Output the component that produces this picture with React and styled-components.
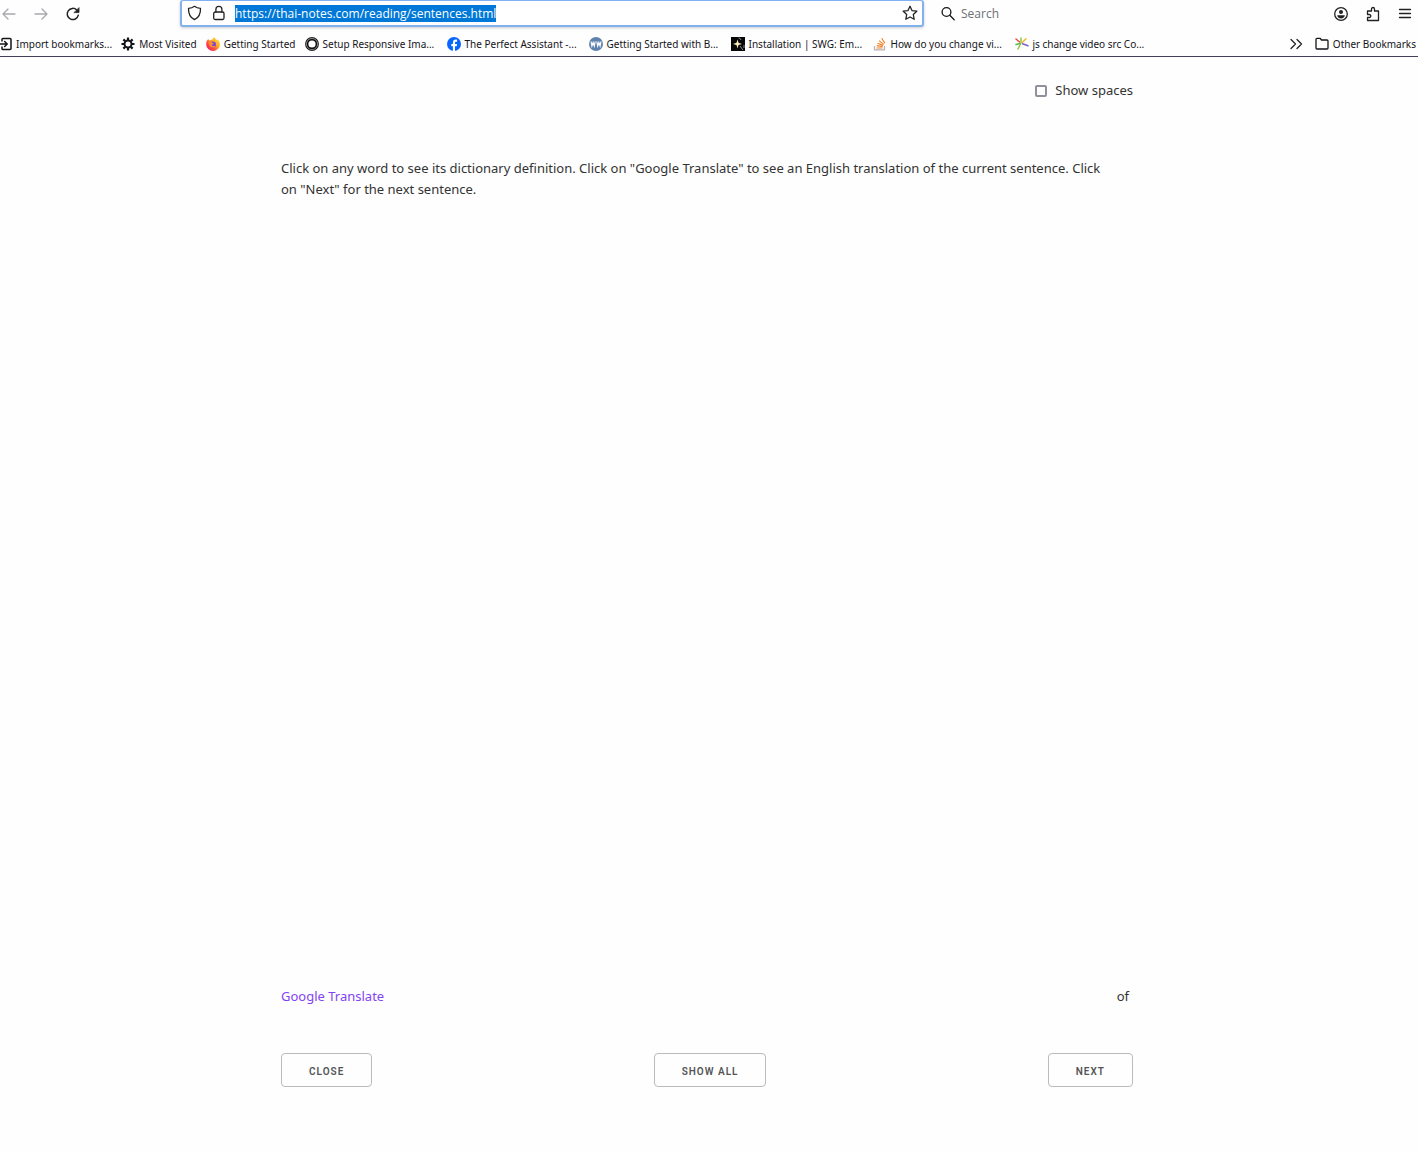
import React, { useEffect, useRef } from 'react';
import styled, { createGlobalStyle } from 'styled-components';

const GlobalStyle = createGlobalStyle`
  * {
    box-sizing: border-box;
  }
  body {
    margin: 0;
    background: #fefefe;
    color: #333333;
    font-family: "Noto Sans", sans-serif;
    font-size: 13px;
    line-height: 21px;
  }
  button, input {
    font-family: inherit;
  }
`

const Browser = styled.header`
  border-bottom: 1px solid #45405a;
  color: #15141a;
`

const NavBar = styled.div`
  display: grid;
  grid-template-columns: 180px minmax(0, 1fr) 494px;
  height: 27px;
  font-family: "Open Sans", sans-serif;
`

const NavGroup = styled.div`
  display: flex;
  align-items: center;
  gap: 16px;
  padding-left: 1px;
`

const IconButton = styled.button`
  display: flex;
  padding: 0;
  border: 0;
  background: none;
  color: ${props => props.disabled ? "#a9a9ad" : "#222222"};
`

const UrlBar = styled.div`
  display: flex;
  align-items: center;
  gap: 8px;
  padding: 0 4px 0 5px;
  border: 2px solid #82b1f2;
  border-top-width: 1px;
  border-radius: 3px;
  background: #ffffff;
  box-shadow: 0 1px 3px rgba(0, 0, 0, 0.2);
`

const UrlInput = styled.input`
  flex: 1;
  min-width: 0;
  height: 17px;
  padding: 0;
  border: 0;
  outline: 0;
  background: none;
  color: #15141a;
  font-size: 12px;
  line-height: 17px;
  &::selection {
    background: #0078d7;
    color: #ffffff;
  }
`

const NavRight = styled.div`
  display: flex;
  align-items: center;
  justify-content: space-between;
  padding: 0 5px 0 16px;
`

const SearchBox = styled.label`
  display: flex;
  align-items: center;
  gap: 5px;
`

const SearchInput = styled.input`
  width: 200px;
  padding: 0;
  border: 0;
  background: none;
  font-size: 12px;
  line-height: 17px;
  &::placeholder {
    color: #6f6f76;
    opacity: 1;
  }
`

const BookmarkBar = styled.nav`
  display: flex;
  align-items: center;
  gap: 9px;
  height: 29px;
  padding: 5px 2px 0 0;
`

const Bookmark = styled.a`
  display: flex;
  align-items: center;
  gap: 4px;
  color: #15141a;
  font-size: 10px;
  line-height: 16px;
  text-decoration: none;
  white-space: nowrap;
  svg {
    flex: none;
  }
`

const BookmarkLabel = styled.span`
  width: ${props => props.$long ? "115px" : "auto"};
`

const BookmarkEnd = styled.div`
  display: flex;
  align-items: center;
  gap: 12px;
  margin-left: auto;
`

const Main = styled.main`
  padding: 23px 4px 24px 0;
`

const Container = styled.div`
  width: 90%;
  max-width: 852px;
  margin: 0 auto;
`

const Options = styled.div`
  display: flex;
  justify-content: flex-end;
`

const CheckLabel = styled.label`
  display: flex;
  align-items: center;
  gap: 8px;
`

const Checkbox = styled.input`
  appearance: none;
  width: 12px;
  height: 12px;
  margin: 0;
  border: 2px solid #8f8f9d;
  border-radius: 2px;
  background: #ffffff;
`

const Intro = styled.p`
  margin: 57px 0 0;
  padding-right: 20px;
`

const Sentence = styled.section`
  min-height: 786px;
`

const Row = styled.div`
  display: flex;
  justify-content: space-between;
`

const TranslateLink = styled.a`
  color: #8343f5;
  text-decoration: none;
`

const Counter = styled.span`
  padding-right: 4px;
`

const Controls = styled(Row)`
  margin-top: 46px;
`

const Button = styled.button`
  height: 34px;
  padding: 3px 27px 0;
  border: 1px solid #bbbbbb;
  border-radius: 4px;
  background: transparent;
  color: #555555;
  font-family: Roboto, sans-serif;
  font-size: 10px;
  font-weight: 600;
  line-height: 12px;
  letter-spacing: 1px;
  text-transform: uppercase;
`

const Icon = ({ size = 16, width, box = "0 0 16 16", children }) => (
  <svg width={width || size} height={size} viewBox={box} fill="none" stroke="currentColor"
    strokeWidth="1.3" strokeLinecap="round" strokeLinejoin="round" aria-hidden="true">
    {children}
  </svg>
)

const BackIcon = () => <Icon><path d="M14 8H2M7 3L2 8l5 5" /></Icon>
const ForwardIcon = () => <Icon><path d="M2 8h12M9 3l5 5-5 5" /></Icon>
const ReloadIcon = () => (
  <Icon>
    <path strokeWidth="1.5" d="M13.3 9.2A5.6 5.6 0 1 1 11.8 4" />
    <path fill="currentColor" strokeWidth="0.8" d="M14 2v4.6H9.4z" />
  </Icon>
)
const ShieldIcon = () => (
  <Icon><path d="M7.500 1.300C9.200 2.700 11.100 3.300 13.500 3.400C13.700 8.700 11.700 12.500 7.500 14.700C3.300 12.500 1.300 8.700 1.500 3.400C3.900 3.300 5.800 2.700 7.500 1.300z" /></Icon>
)
const LockIcon = () => (
  <Icon><rect x="2.700" y="7" width="10.300" height="7.500" rx="1.500" /><path d="M4.900 7V4.300a3 3 0 0 1 6 0V7" /></Icon>
)
const StarIcon = () => (
  <Icon><path d="M8 1.300l2 4.300 4.800.6-3.500 3.300.9 4.800L8 12l-4.200 2.300.9-4.800L1.200 6.200 6 5.600z" /></Icon>
)
const SearchIcon = () => <Icon><circle cx="6.500" cy="6" r="4.400" /><path d="M9.800 9.300l4.400 4.400" /></Icon>
const AccountIcon = () => (
  <Icon>
    <circle cx="8" cy="8" r="6.300" />
    <circle cx="8" cy="6" r="2" fill="currentColor" stroke="none" />
    <path d="M4.200 9.200h7.600c0 2-1.700 3.200-3.800 3.200s-3.800-1.200-3.800-3.200z" fill="currentColor" stroke="none" />
  </Icon>
)
const PuzzleIcon = () => (
  <Icon><path d="M2.500 5h4V3a1.500 1.500 0 0 1 3 0v2H13.500v9.500H2.500V11.500h1.800a1.500 1.500 0 0 0 0-3H2.500z" /></Icon>
)
const MenuIcon = () => <Icon><path d="M2.500 3.500h11M2.500 7.500h11M2.500 11.500h11" /></Icon>

const ImportIcon = () => (
  <Icon size={14} width={12} box="2 0 12 14">
    <path strokeWidth="1.500" d="M4 4V2.300Q4 1.500 5 1.500h7Q13 1.500 13 2.500v9q0 1-1 1H5q-1 0-1-.8V10M0 7h9M6.700 4.500L9.200 7 6.700 9.500" />
  </Icon>
)
const GearIcon = () => (
  <Icon size={14} box="0 0 14 14">
    <circle cx="7" cy="7" r="3.500" strokeWidth="2" />
    <path strokeWidth="2.200" strokeLinecap="butt" d="M7 .5v2.500M7 11v2.500M.5 7H3M11 7h2.500M2.400 2.400l1.800 1.800M9.800 9.800l1.800 1.800M2.400 11.600l1.800-1.800M9.800 4.200l1.800-1.800" />
  </Icon>
)
const FirefoxIcon = () => (
  <svg width="14" height="14" viewBox="0 0 14 14" aria-hidden="true">
    <defs>
      <linearGradient id="fox" x1="1" y1="0" x2="0" y2="1">
        <stop offset="0" stopColor="#fff04a" />
        <stop offset=".4" stopColor="#ffad1f" />
        <stop offset=".7" stopColor="#ff3f47" />
        <stop offset="1" stopColor="#e31587" />
      </linearGradient>
    </defs>
    <path fill="url(#fox)" d="M1 3.500L2.300 2l.8 1.500L5 3C6.500 3 7 1.500 8.300 0c.4 1.800 2 2.200 3 3.600l.5-1C13 4 14 5.800 14 7.500A6.900 6.500 0 0 1 .2 7.500C.1 6 .5 4.600 1 3.500z" />
    <circle cx="7" cy="7.400" r="3" fill="#7a45dc" />
    <path fill="#ff8f2a" d="M2.500 5.300c1.500-.8 3-.5 4.200.6L8 6.300c-.5 1-1.800.8-2.200 1.600.4 1.200 2 1.600 3.800.8-1 2-5 2.400-6.300-.2z" />
  </svg>
)
const RingIcon = () => (
  <svg width="14" height="14" viewBox="0 0 14 14" fill="none" aria-hidden="true">
    <circle cx="7" cy="7" r="6.300" stroke="#222222" strokeWidth="1.300" />
    <circle cx="7" cy="7" r="5.300" stroke="#777777" strokeWidth=".8" />
    <circle cx="7" cy="7" r="4.400" stroke="#111111" strokeWidth="1.600" />
  </svg>
)
const FacebookIcon = () => (
  <svg width="14" height="14" viewBox="0 0 14 14" aria-hidden="true">
    <circle cx="7" cy="7" r="7" fill="#0866ff" />
    <path fill="#ffffff" d="M5.900 14V9.300H4.300V7h1.600V5.800c0-2.200 1-3.200 3-3.200.5 0 1 .1 1.200.2v2H9.200c-.9 0-1.200.4-1.200 1.200v1h2.100L9.700 9.300H8V14z" />
  </svg>
)
const WwIcon = () => (
  <svg width="14" height="14" viewBox="0 0 14 14" fill="none" aria-hidden="true">
    <circle cx="7" cy="7" r="7" fill="#5f83ad" />
    <path stroke="#ffffff" strokeWidth="1.200" d="M2 4.500l.9 4.500 1.200-3.500L5.300 9l.9-4.500M7.800 4.500l.9 4.500 1.200-3.500L11.100 9l.9-4.500" />
  </svg>
)
const SparkIcon = () => (
  <svg width="14" height="14" viewBox="0 0 14 14" aria-hidden="true">
    <path fill="#080808" d="M0 0h14v14H0z" />
    <path fill="#fff0bd" d="M6.500 2.500l1 3.300 3.500 1.200-3.500 1-1 3.500-1-3.500L2 7l3.500-1.200z" />
    <path fill="none" stroke="#8c8c92" d="M7.500 1q2 0 2.500 2M9 9l3 4M13 8v3" />
  </svg>
)
const StackIcon = () => (
  <svg width="14" height="14" viewBox="0 0 14 14" fill="none" strokeWidth="1.200" aria-hidden="true">
    <path stroke="#b3b3b8" d="M1.500 9v3.800h10V9" />
    <path stroke="#f48024" d="M3.500 11h6M3.700 8.700l6 .9M4.500 6.200l5.600 2.200M6.100 3.600l4.600 3.800M8.700 1.300l3.200 5" />
  </svg>
)
const BurstIcon = () => (
  <svg width="14" height="14" viewBox="0 0 14 14" fill="none" strokeWidth="1.500" strokeLinecap="round" aria-hidden="true">
    <path stroke="#e94b4b" d="M1 2l3.500 3" />
    <path stroke="#8fc63f" d="M6 1v4.500M5.500 7L3 12" />
    <path stroke="#f3b62b" d="M7 5.800l4-4" />
    <path stroke="#58b957" d="M1 7.500l4-1" />
    <path stroke="#7e63c8" d="M7.500 6.800l5.500 2" />
  </svg>
)
const ChevronsIcon = () => <Icon size={14} box="0 0 14 14"><path d="M2 2.500L6.500 7 2 11.500M8 2.500L12.500 7 8 11.500" /></Icon>
const FolderIcon = () => (
  <Icon size={14} box="0 0 14 14"><path d="M1 2.300q0-1 1-1h3l1.500 1.700H12q1 0 1 1V11q0 1-1 1H2q-1 0-1-1z" /></Icon>
)

const bookmarks = [
  { label: "Import bookmarks...", icon: ImportIcon },
  { label: "Most Visited", icon: GearIcon },
  { label: "Getting Started", icon: FirefoxIcon },
  { label: "Setup Responsive Ima...", icon: RingIcon, long: true },
  { label: "The Perfect Assistant -...", icon: FacebookIcon, long: true },
  { label: "Getting Started with B...", icon: WwIcon, long: true },
  { label: "Installation | SWG: Em...", icon: SparkIcon, long: true },
  { label: "How do you change vi...", icon: StackIcon, long: true },
  { label: "js change video src Co...", icon: BurstIcon, long: true },
]

function BrowserHeader() {
  const url = useRef(null)

  useEffect(() => {
    url.current.focus()
    url.current.select()
  }, [])

  return (
    <Browser>
      <NavBar>
        <NavGroup>
          <IconButton aria-label="Back" disabled><BackIcon /></IconButton>
          <IconButton aria-label="Forward" disabled><ForwardIcon /></IconButton>
          <IconButton aria-label="Reload"><ReloadIcon /></IconButton>
        </NavGroup>
        <UrlBar>
          <IconButton aria-label="Tracking protection"><ShieldIcon /></IconButton>
          <IconButton aria-label="Connection secure"><LockIcon /></IconButton>
          <UrlInput ref={url} aria-label="Address" defaultValue="https://thai-notes.com/reading/sentences.html" />
          <IconButton aria-label="Bookmark this page"><StarIcon /></IconButton>
        </UrlBar>
        <NavRight>
          <SearchBox>
            <SearchIcon />
            <SearchInput placeholder="Search" aria-label="Search" />
          </SearchBox>
          <NavGroup>
            <IconButton aria-label="Account"><AccountIcon /></IconButton>
            <IconButton aria-label="Extensions"><PuzzleIcon /></IconButton>
            <IconButton aria-label="Menu"><MenuIcon /></IconButton>
          </NavGroup>
        </NavRight>
      </NavBar>
      <BookmarkBar>
        {bookmarks.map(({ label, icon: BookmarkIcon, long }) => (
          <Bookmark href="#" key={label}>
            <BookmarkIcon />
            <BookmarkLabel $long={long}>{label}</BookmarkLabel>
          </Bookmark>
        ))}
        <BookmarkEnd>
          <IconButton aria-label="More bookmarks"><ChevronsIcon /></IconButton>
          <Bookmark href="#"><FolderIcon />Other Bookmarks</Bookmark>
        </BookmarkEnd>
      </BookmarkBar>
    </Browser>
  )
}

function App() {
  return (
    <>
      <GlobalStyle />
      <BrowserHeader />
      <Main>
        <Container>
          <Options>
            <CheckLabel>
              <Checkbox type="checkbox" />
              Show spaces
            </CheckLabel>
          </Options>
          <Intro>
            Click on any word to see its dictionary definition. Click on "Google Translate" to see an
            English translation of the current sentence. Click on "Next" for the next sentence.
          </Intro>
          <Sentence />
          <Row>
            <TranslateLink href="#">Google Translate</TranslateLink>
            <Counter>of</Counter>
          </Row>
          <Controls>
            <Button>Close</Button>
            <Button>Show all</Button>
            <Button>Next</Button>
          </Controls>
        </Container>
      </Main>
    </>
  );
}

export default App;
